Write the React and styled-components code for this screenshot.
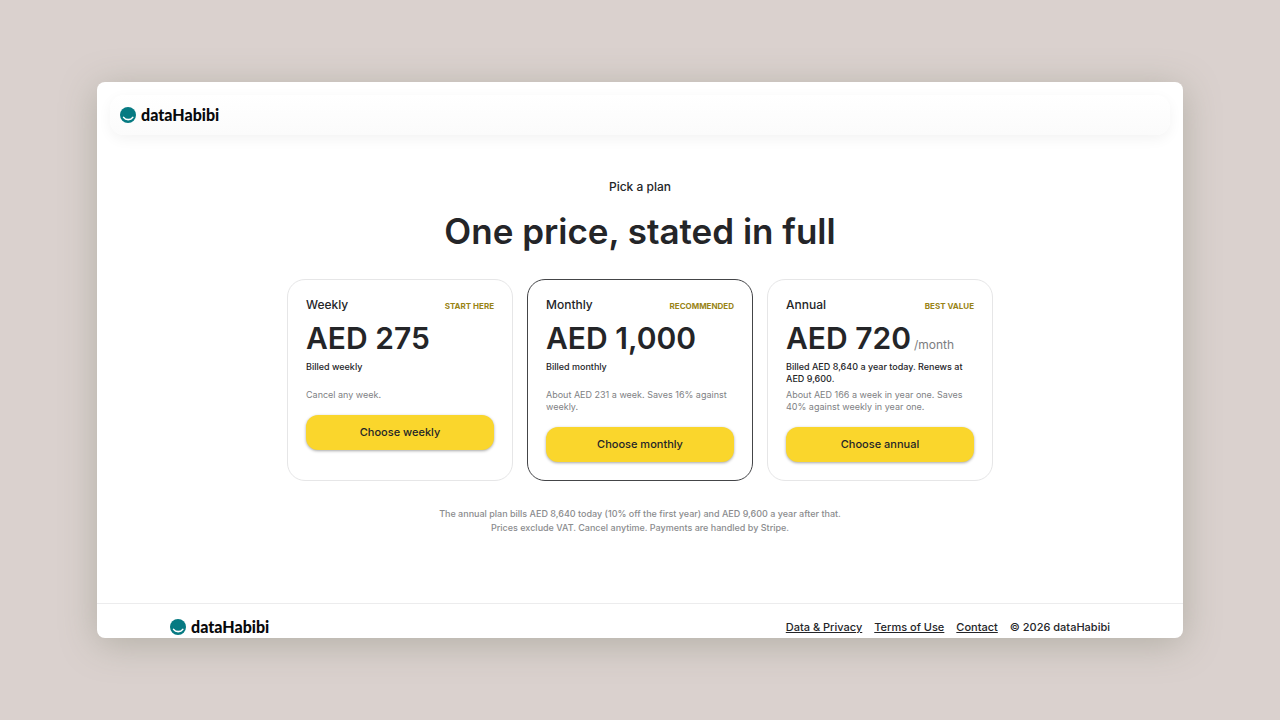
import React from 'react'
import styled, { createGlobalStyle } from 'styled-components'

const plans = [
  {
    id: 'weekly',
    name: 'Weekly',
    badge: 'Start here',
    price: 'AED 275',
    billing: 'Billed weekly',
    note: 'Cancel any week.',
  },
  {
    id: 'monthly',
    name: 'Monthly',
    badge: 'Recommended',
    price: 'AED 1,000',
    billing: 'Billed monthly',
    note: 'About AED 231 a week. Saves 16% against weekly.',
    selected: true,
  },
  {
    id: 'annual',
    name: 'Annual',
    badge: 'Best value',
    price: 'AED 720',
    period: '/month',
    billing: 'Billed AED 8,640 a year today. Renews at AED 9,600.',
    note: 'About AED 166 a week in year one. Saves 40% against weekly in year one.',
  },
]

const Brand = () => (
  <BrandWrapper>
    <svg width="16" height="16" viewBox="0 0 16 16" aria-hidden="true">
      <circle cx="8" cy="8" r="8" fill="#067a82" />
      <path
        d="M3.6 10.4C5.7 13.4 10.7 13.4 12.8 10.4"
        fill="none"
        stroke="#ffffff"
        strokeWidth="1.6"
        strokeLinecap="round"
      />
    </svg>
    <BrandName>dataHabibi</BrandName>
  </BrandWrapper>
)

export default () => {
  return (
    <>
      <GlobalStyle />
      <Backdrop>
        <Window>
          <NavBar>
            <Brand />
          </NavBar>
          <Main>
            <Eyebrow>Pick a plan</Eyebrow>
            <Header>One price, stated in full</Header>
            <Plans>
              {plans.map((plan) => (
                <Card key={plan.id} $selected={plan.selected}>
                  <CardTop>
                    <PlanName>{plan.name}</PlanName>
                    <Badge>{plan.badge}</Badge>
                  </CardTop>
                  <Price>
                    {plan.price}
                    {plan.period && <Period>{plan.period}</Period>}
                  </Price>
                  <Billing>{plan.billing}</Billing>
                  <Note>{plan.note}</Note>
                  <Button type="button">Choose {plan.id}</Button>
                </Card>
              ))}
            </Plans>
            <Terms>
              The annual plan bills AED 8,640 today (10% off the first year) and AED 9,600 a year
              after that.
              <br />
              Prices exclude VAT. Cancel anytime. Payments are handled by Stripe.
            </Terms>
          </Main>
          <Footer>
            <Brand />
            <FooterLinks>
              <FooterLink href="#privacy">Data &amp; Privacy</FooterLink>
              <FooterLink href="#terms">Terms of Use</FooterLink>
              <FooterLink href="#contact">Contact</FooterLink>
              <span>© 2026 dataHabibi</span>
            </FooterLinks>
          </Footer>
        </Window>
      </Backdrop>
    </>
  )
}

const GlobalStyle = createGlobalStyle`
  * {
    box-sizing: border-box;
  }
  body {
    margin: 0;
    font-family: 'Inter', 'Liberation Sans', sans-serif;
    font-weight: 500;
    color: #242528;
    background: #dad1ce;
  }
  h1, h2, p {
    margin: 0;
    font-weight: 500;
  }
`
const Backdrop = styled.div`
  display: flex;
  min-height: 100vh;
  padding: 82px 97px;
`
const Window = styled.div`
  flex: 1;
  display: flex;
  flex-direction: column;
  overflow: hidden;
  background: #ffffff;
  border-radius: 8px;
  box-shadow: 0 6px 36px rgba(120, 125, 105, 0.4);
`
const NavBar = styled.header`
  display: flex;
  align-items: center;
  height: 40px;
  margin: 13px 13px 0;
  padding: 0 10px;
  border-radius: 14px;
  background: linear-gradient(#ffffff, #fbfbfb);
  box-shadow: 0 4px 14px rgba(0, 0, 0, 0.05);
`
const BrandWrapper = styled.div`
  display: flex;
  align-items: center;
  gap: 5px;
`
const BrandName = styled.span`
  font-family: 'Lato', sans-serif;
  font-size: 16px;
  line-height: 16px;
  font-weight: 900;
  color: #08090b;
`
const Main = styled.main`
  flex: 1;
  display: flex;
  flex-direction: column;
  align-items: center;
  padding: 44px 20px 68px;
  text-align: center;
`
const Eyebrow = styled.p`
  font-size: 12px;
  line-height: 16px;
`
const Header = styled.h1`
  margin-top: 16px;
  font-size: 35px;
  line-height: 40px;
  font-weight: 600;
`
const Plans = styled.div`
  display: grid;
  grid-template-columns: repeat(3, 1fr);
  gap: 14px;
  width: 100%;
  max-width: 706px;
  margin-top: 28px;
  text-align: left;
`
const Card = styled.section`
  display: flex;
  flex-direction: column;
  padding: 18px;
  border: 1px solid ${({ $selected }) => ($selected ? '#444548' : '#e6e6e7')};
  border-radius: 18px;
`
const CardTop = styled.div`
  display: flex;
  align-items: baseline;
  justify-content: space-between;
`
const PlanName = styled.h2`
  font-size: 12px;
  line-height: 14px;
`
const Badge = styled.span`
  font-size: 8px;
  line-height: 10px;
  font-weight: 700;
  text-transform: uppercase;
  color: #998415;
`
const Price = styled.p`
  display: flex;
  align-items: baseline;
  gap: 3px;
  margin-top: 8px;
  font-size: 30px;
  line-height: 36px;
  font-weight: 600;
`
const Period = styled.span`
  font-size: 12px;
  line-height: 14px;
  font-weight: 400;
  color: #7c7d80;
`
const Billing = styled.p`
  min-height: 24px;
  margin-top: 5px;
  font-size: 9px;
  line-height: 12px;
`
const Note = styled.p`
  margin-top: 4px;
  font-size: 9px;
  line-height: 12px;
  font-weight: 400;
  color: #808184;
`
const Button = styled.button`
  height: 35px;
  margin-top: 14px;
  padding: 0 12px 2px;
  border: none;
  border-radius: 12px;
  background: #fad62c;
  box-shadow: 0 1px 3px rgba(0, 0, 0, 0.35);
  font-family: inherit;
  font-size: 11px;
  font-weight: 500;
  color: #242528;
  cursor: pointer;
`
const Terms = styled.p`
  margin-top: 26px;
  font-size: 9px;
  line-height: 14px;
  color: #8b8c8e;
`
const Footer = styled.footer`
  display: flex;
  align-items: center;
  justify-content: space-between;
  padding: 15px 73px 3px;
  border-top: 1px solid #ececed;
`
const FooterLinks = styled.nav`
  display: flex;
  gap: 12px;
  font-size: 11px;
  line-height: 16px;
`
const FooterLink = styled.a`
  color: inherit;
  text-underline-offset: 1px;
`
